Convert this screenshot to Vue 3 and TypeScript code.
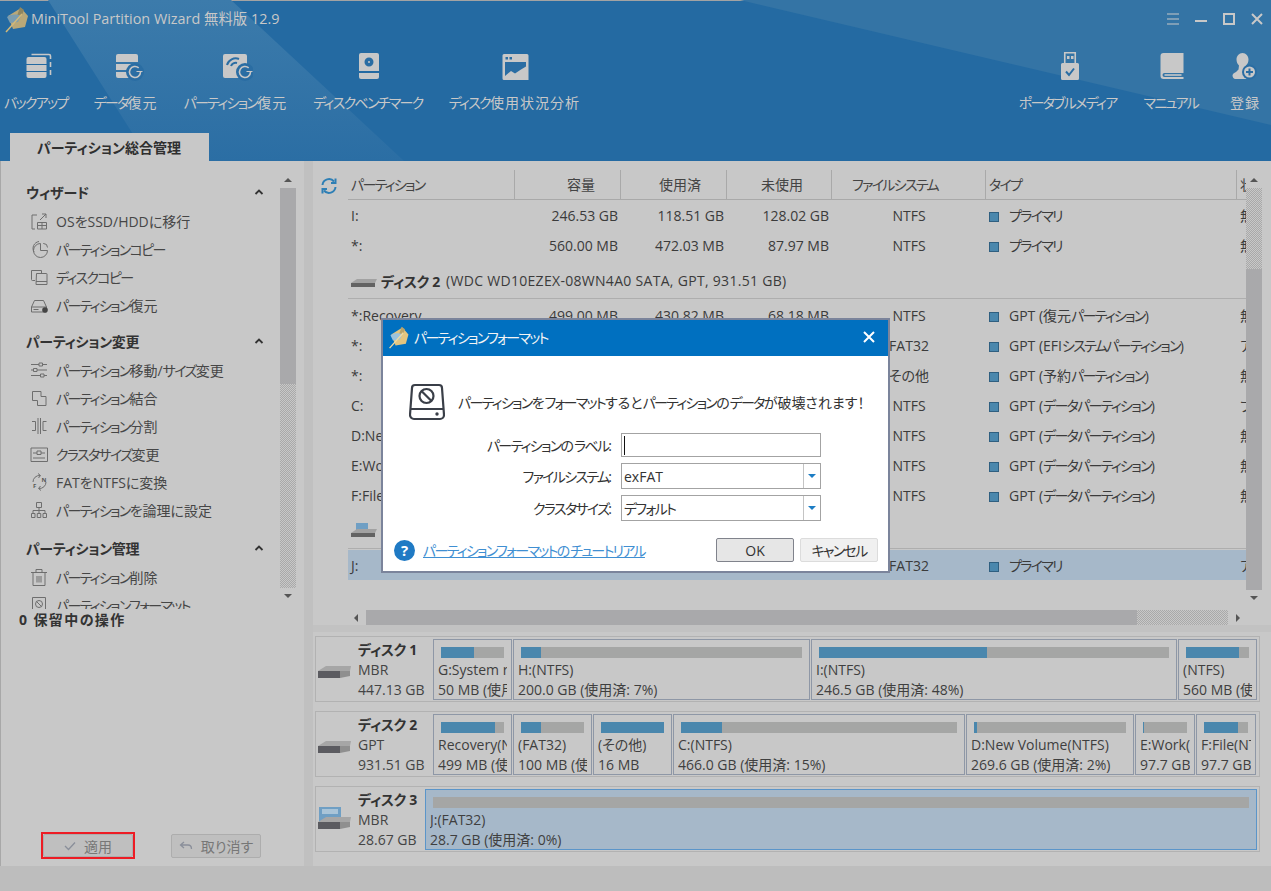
<script setup lang="ts">
import { h } from 'vue'

type Shape = { d: string; k: 'l' | 'b' | 'sl' | 'sb' }
type Tool = { label: string; tx: number; shapes: Shape[] }

const K = (p: { t: string }) =>
  p.t
    .split(/([\u30A0-\u30FF]+)/)
    .filter(Boolean)
    .map((s) => (/^[\u30A0-\u30FF]/.test(s) ? h('span', { class: 'kana' }, s) : s))

const ring = (cx: number, cy: number): Shape[] => [
  { d: `M${cx - 9} ${cy}a9 9 0 1 0 18 0a9 9 0 1 0-18 0z`, k: 'b' },
  { d: `M${cx + 5.5} ${cy}a5.5 5.5 0 1 1-1.8-4.1`, k: 'sl' },
  { d: `M${cx + 1.5} ${cy}h6v-1h-6z`, k: 'l' },
]

const leftTools: Tool[] = [
  { label: 'バックアップ', tx: 8.5, shapes: [
    { d: 'M0 7a2 2 0 0 1 2-2h16a2 2 0 0 1 2 2v5H0z', k: 'l' },
    { d: 'M0 13h20v6H0z', k: 'l' },
    { d: 'M0 20h20v4a2 2 0 0 1-2 2H2a2 2 0 0 1-2-2z', k: 'l' },
    { d: 'M5 2.5h17.5a1.5 1.5 0 0 1 1.5 1.5v3M24 10v5M24 18v5', k: 'sl' },
  ] },
  { label: 'データ復元', tx: 8, shapes: [
    { d: 'M0 4a2 2 0 0 1 2-2h18a2 2 0 0 1 2 2v6H0z', k: 'l' },
    { d: 'M0 12h22v6H0z', k: 'l' },
    { d: 'M0 20h22v6H2a2 2 0 0 1-2-2z', k: 'l' },
    ...ring(19, 20),
  ] },
  { label: 'パーティション復元', tx: 6, shapes: [
    { d: 'M2 2h20a2 2 0 0 1 2 2v22H2a2 2 0 0 1-2-2V4a2 2 0 0 1 2-2z', k: 'l' },
    { d: 'M4 13a9 9 0 0 1 12-6', k: 'sb' },
    { d: 'M8 14a5 5 0 0 1 6-3', k: 'sb' },
    ...ring(22, 20),
  ] },
  { label: 'ディスクベンチマーク', tx: 9, shapes: [
    { d: 'M2 1h16a2 2 0 0 1 2 2v16H0V3a2 2 0 0 1 2-2z', k: 'l' },
    { d: 'M10 5.5a4.5 4.5 0 1 0 0 9a4.5 4.5 0 1 0 0-9zM10 9a1 1 0 1 1 0 2a1 1 0 1 1 0-2z', k: 'b' },
    { d: 'M0 21h20v4a2 2 0 0 1-2 2H2a2 2 0 0 1-2-2z', k: 'l' },
  ] },
  { label: 'ディスク使用状況分析', tx: 6.5, shapes: [
    { d: 'M1.5 2h23a1.5 1.5 0 0 1 1.5 1.5V28H1.5A1.5 1.5 0 0 1 0 26.500V3.500A1.5 1.5 0 0 1 1.500 2z', k: 'l' },
    { d: 'M3 5h2.500v2.500H3zM7 5h2.500v2.500H7zM2.500 10h21v16h-21z', k: 'b' },
    { d: 'M2.500 24l6-5 4 2.500 6-4 5-3V26h-21z', k: 'l' },
  ] },
]

const rightTools: Tool[] = [
  { label: 'ポータブルメディア', tx: 11, shapes: [
    { d: 'M3.750 .75h10.500v11.500H3.750z', k: 'sl' },
    { d: 'M6 4h2.500v3H6zM10 4h2.500v3H10z', k: 'l' },
    { d: 'M1.500 11h15a1.500 1.500 0 0 1 1.500 1.500V26.500a1.500 1.500 0 0 1-1.500 1.500h-15A1.500 1.500 0 0 1 0 26.500v-14A1.500 1.500 0 0 1 1.500 11z', k: 'l' },
    { d: 'M5 19.500l3 3.500 5-6.500', k: 'sb' },
  ] },
  { label: 'マニュアル', tx: 7.5, shapes: [
    { d: 'M3 1h20v20H4a2 2 0 0 0 0 4h19v2H3a3 3 0 0 1-3-3V4a3 3 0 0 1 3-3z', k: 'l' },
    { d: 'M4 23h17', k: 'sl' },
  ] },
  { label: '登録', tx: 5.5, shapes: [
    { d: 'M10 1c3.500 0 6 3 6 6.500 0 2.500-1 4.500-2.500 6l.500 4 3 2-1 7.500H2.500C1 26.500 0 25 0 23.500c0-1.500 1.500-2.500 3.500-3.500L6 17.500l.5-4C5 12 4 10 4 7.500 4 4 6.500 1 10 1z', k: 'l' },
    { d: 'M17 12.500a7.500 7.500 0 1 0 0 15a7.500 7.500 0 1 0 0-15z', k: 'b' },
    { d: 'M17 14.500a5.500 5.500 0 1 0 0 11a5.500 5.500 0 1 0 0-11zM16 16.500h2V19h2.500v2H18v2.500h-2V21h-2.500v-2H16z', k: 'l' },
  ] },
]

type SideItem = { text: string; icon: string[]; letters?: boolean; dot?: boolean }
const sections: { title: string; items: SideItem[] }[] = [
  { title: 'ウィザード', items: [
    { text: 'OSをSSD/HDDに移行', icon: ['M7 3H2v14h3', 'M7.500 10.500h9v6.500h-9z', 'M12 10.500V17', 'M7.500 13.500h9', 'M10 8l6-6', 'M12 2h4v4'] },
    { text: 'パーティションコピー', icon: ['M10.500 3.500a7 7 0 1 0 7 7', 'M10.500 3.500v7h7', 'M13 3.500h.5a4 4 0 0 1 4 4', 'M4 12a7 7 0 0 1 5-10.500'] },
    { text: 'ディスクコピー', icon: ['M5 12.500H2.500a1 1 0 0 1-1-1V2.500h10v2.500', 'M6.500 5.500h10a.5.5 0 0 1 .5.5v10.500H6z', 'M6 13.500h11'] },
    { text: 'パーティション復元', dot: true, icon: ['M1.500 11l3-6.500h9l3 6.500', 'M1.500 11h15v5h-15z', 'M3.500 13.500h5'] },
  ] },
  { title: 'パーティション変更', items: [
    { text: 'パーティション移動/サイズ変更', icon: ['M1 3.500h8M13 3.500h4', 'M9 2h3.500v3H9z', 'M1 9h2M7 9h10', 'M3.500 7.500H7v3H3.500z', 'M1 14.500h9M14 14.500h3', 'M10.500 13H14v3h-3.500z'] },
    { text: 'パーティション結合', icon: ['M2.500 2.500h8.500v5h5v9H7.500v-5h-5z'] },
    { text: 'パーティション分割', icon: ['M8 1v16', 'M10.500 1v16', 'M2 4.500h3.500v9H2', 'M16.500 4.500H13v9h3.500'] },
    { text: 'クラスタサイズ変更', icon: ['M1 3h16.500v13.500H1z', 'M3 8h4M11 8h4', 'M7 6h4v3.500H7z', 'M3 13h12'] },
    { text: 'FATをNTFSに変換', letters: true, icon: ['M3 9a6.500 6.500 0 0 1 7-6.500', 'M8 .5l2.500 2-2 2.500', 'M16 9a6.500 6.500 0 0 1-7 6.500', 'M11 17.500l-2.500-2 2-2.500'] },
    { text: 'パーティションを論理に設定', icon: ['M6.500 1.500h5v5h-5z', 'M9 6.500v5.500', 'M3 12V9.500h12V12', 'M1.500 12.500h3.500v4h-3.500z', 'M7.250 12.500h3.500v4h-3.500z', 'M13 12.500h3.500v4H13z'] },
  ] },
  { title: 'パーティション管理', items: [
    { text: 'パーティション削除', icon: ['M1 4.500h16', 'M6 4.500v-3h6v3', 'M3 4.500v13h12v-13', 'M7 8v6.500M9 8v6.500M11 8v6.500'] },
    { text: 'パーティションフォーマット', icon: ['M2.500 1.500h13v15h-13z', 'M9 4.500a3.500 3.500 0 1 0 0 7a3.500 3.500 0 1 0 0-7z', 'M6.500 5.500l5 5'] },
  ] },
]

type Row =
  | { kind: 'disk'; name: string; info: string; usb: boolean }
  | { kind: 'part'; cells: string[]; selected?: boolean }

const part = (...cells: string[]): Row => ({ kind: 'part', cells })

const rows: Row[] = [
  part('I:', '246.53 GB', '118.51 GB', '128.02 GB', 'NTFS', 'プライマリ', '無し'),
  part('*:', '560.00 MB', '472.03 MB', '87.97 MB', 'NTFS', 'プライマリ', '無し'),
  { kind: 'disk', name: 'ディスク 2', info: '(WDC WD10EZEX-08WN4A0 SATA, GPT, 931.51 GB)', usb: false },
  part('*:Recovery', '499.00 MB', '430.82 MB', '68.18 MB', 'NTFS', 'GPT (復元パーティション)', '無し'),
  part('*:', '100.00 MB', '31.05 MB', '68.95 MB', 'FAT32', 'GPT (EFIシステムパーティション)', 'アクティブ'),
  part('*:', '16.00 MB', '16.00 MB', '0 B', 'その他', 'GPT (予約パーティション)', '無し'),
  part('C:', '466.01 GB', '71.20 GB', '394.81 GB', 'NTFS', 'GPT (データパーティション)', 'ブート'),
  part('D:New Volume', '269.55 GB', '5.90 GB', '263.65 GB', 'NTFS', 'GPT (データパーティション)', '無し'),
  part('E:Work', '97.66 GB', '1.20 GB', '96.46 GB', 'NTFS', 'GPT (データパーティション)', '無し'),
  part('F:File', '97.66 GB', '75.30 GB', '22.36 GB', 'NTFS', 'GPT (データパーティション)', '無し'),
  { kind: 'disk', name: 'ディスク 3', info: '(Generic USB, MBR, 28.67 GB)', usb: true },
  { kind: 'part', selected: true, cells: ['J:', '28.67 GB', '20.34 MB', '28.65 GB', 'FAT32', 'プライマリ', 'アクティブ'] },
]

const columns = ['パーティション', '容量', '使用済', '未使用', 'ファイルシステム', 'タイプ', '状態']

type Part = { name: string; size: string; w: number; pct: number; selected?: boolean }
const disks: { name: string; type: string; size: string; usb?: boolean; parts: Part[] }[] = [
  { name: 'ディスク 1', type: 'MBR', size: '447.13 GB', parts: [
    { name: 'G:System reserved(NTFS)', size: '50 MB (使用済: 52%)', w: 79, pct: 52 },
    { name: 'H:(NTFS)', size: '200.0 GB (使用済: 7%)', w: 297, pct: 7 },
    { name: 'I:(NTFS)', size: '246.5 GB (使用済: 48%)', w: 366, pct: 48 },
    { name: '(NTFS)', size: '560 MB (使用済: 84%)', w: 79, pct: 84 },
  ] },
  { name: 'ディスク 2', type: 'GPT', size: '931.51 GB', parts: [
    { name: 'Recovery(NTFS)', size: '499 MB (使用済: 86%)', w: 79, pct: 86 },
    { name: '(FAT32)', size: '100 MB (使用済: 32%)', w: 79, pct: 32 },
    { name: '(その他)', size: '16 MB', w: 79, pct: 100 },
    { name: 'C:(NTFS)', size: '466.0 GB (使用済: 15%)', w: 292, pct: 15 },
    { name: 'D:New Volume(NTFS)', size: '269.6 GB (使用済: 2%)', w: 168, pct: 2 },
    { name: 'E:Work(NTFS)', size: '97.7 GB (使用済: 1%)', w: 60, pct: 2 },
    { name: 'F:File(NTFS)', size: '97.7 GB (使用済: 77%)', w: 60, pct: 77 },
  ] },
  { name: 'ディスク 3', type: 'MBR', size: '28.67 GB', usb: true, parts: [
    { name: 'J:(FAT32)', size: '28.7 GB (使用済: 0%)', w: 832, pct: 0, selected: true },
  ] },
]
</script>

<template>
  <div class="window">
    <header class="header">
      <svg class="header-art" viewBox="0 0 1271 161" width="1271" height="161" aria-hidden="true">
        <defs>
          <linearGradient id="band" x1="0" y1="0" x2="0" y2="1">
            <stop offset="0" stop-color="#3c7bab" />
            <stop offset="1" stop-color="#2b6ea4" />
          </linearGradient>
        </defs>
        <polygon points="48,0 231,0 404,161 150,161" fill="url(#band)" />
        <polygon points="740,0 1271,0 1271,125" fill="#3474a5" />
      </svg>

      <div class="titlebar">
        <svg class="logo" viewBox="0 0 24 28" width="24" height="28" aria-hidden="true">
          <path d="M3 11l13-8 7 8-3 11-12 2z" fill="#b9a878" />
          <path d="M15 2l4 3-2 5-5 1z" fill="#8f8660" />
          <path d="M2 12c4-3 10-3 14-1l-3 6-8 1z" fill="#7b9db0" />
          <path d="M1 27L17 9" stroke="#d3b978" stroke-width="1.500" fill="none" />
        </svg>
        <span class="app-title">MiniTool Partition Wizard 無料版 12.9</span>
        <div class="winctl">
          <svg viewBox="0 0 14 14" width="14" height="14"><path d="M1 2h12M1 7h12M1 12h12" /></svg>
          <svg viewBox="0 0 14 14" width="14" height="14"><path d="M1 9h12" class="thick" /></svg>
          <svg viewBox="0 0 14 14" width="14" height="14"><path d="M2 2h10v10H2z" class="thick" /></svg>
          <svg viewBox="0 0 14 14" width="14" height="14"><path d="M2 2l10 10M12 2L2 12" class="thick" /></svg>
        </div>
      </div>

      <div class="toolbar">
        <div class="tool-group">
          <div v-for="t in leftTools" :key="t.label" class="tool">
            <svg class="tool-icon" viewBox="0 0 36 30" width="36" height="30" aria-hidden="true">
              <g :transform="`translate(${t.tx} 0)`">
                <path v-for="(s, i) in t.shapes" :key="i" :d="s.d" :class="`k-${s.k}`" />
              </g>
            </svg>
            <span class="tool-label"><K :t="t.label" /></span>
          </div>
        </div>
        <div class="tool-group tool-group-right">
          <div v-for="t in rightTools" :key="t.label" class="tool">
            <svg class="tool-icon" viewBox="0 0 36 30" width="36" height="30" aria-hidden="true">
              <g :transform="`translate(${t.tx} 0)`">
                <path v-for="(s, i) in t.shapes" :key="i" :d="s.d" :class="`k-${s.k}`" />
              </g>
            </svg>
            <span class="tool-label"><K :t="t.label" /></span>
          </div>
        </div>
      </div>

      <div class="tabrow">
        <div class="tab">パーティション総合管理</div>
      </div>
    </header>

    <div class="main">
      <aside class="sidebar">
        <div class="side-scroll">
          <div class="side-list">
            <section v-for="s in sections" :key="s.title" class="section">
              <div class="section-head">
                <span>{{ s.title }}</span>
                <svg viewBox="0 0 10 6" width="10" height="6" aria-hidden="true"><path d="M1.500 5L5 1.500 8.500 5" /></svg>
              </div>
              <div v-for="it in s.items" :key="it.text" class="side-item">
                <svg class="side-icon" viewBox="0 0 18 18" width="18" height="18" aria-hidden="true">
                  <path v-for="(d, i) in it.icon" :key="i" :d="d" />
                  <circle v-if="it.dot" cx="15" cy="14" r="2.800" class="dot" />
                  <text v-if="it.letters" x="11.500" y="9" class="tiny">N</text>
                  <text v-if="it.letters" x="3" y="15" class="tiny">F</text>
                </svg>
                <span><K :t="it.text" /></span>
              </div>
            </section>
          </div>
          <div class="vscroll side-vscroll">
            <div class="arrow-box"><i class="tri up"></i></div>
            <div class="track">
              <div class="thumb side-thumb"></div>
              <div class="dither grow"></div>
            </div>
            <div class="arrow-box"><i class="tri down"></i></div>
          </div>
        </div>
        <div class="pending">0 保留中の操作</div>
        <div class="actions">
          <div class="apply-frame">
            <button class="act-btn apply">
              <svg viewBox="0 0 12 10" width="12" height="10" aria-hidden="true"><path d="M1 5l3.500 3.500L11 1.500" /></svg>
              <span>適用</span>
            </button>
          </div>
          <button class="act-btn undo">
            <svg viewBox="0 0 14 10" width="14" height="10" aria-hidden="true"><path d="M5 1L1.500 4 5 7M1.500 4H9c2 0 3.500 1.500 3.500 4" /></svg>
            <span>取り消す</span>
          </button>
        </div>
      </aside>

      <div class="splitter"></div>

      <div class="content">
        <div class="table-area">
          <div class="table-top">
            <div class="refresh-col">
              <svg viewBox="0 0 18 18" width="18" height="18" aria-hidden="true">
                <path d="M2.500 8a6.500 6.500 0 0 1 11.500-3.500M15.500 10A6.500 6.500 0 0 1 4 13.500" />
                <path d="M15.500 1.500v4.500h-4.500M2.500 16.500V12H7" />
              </svg>
            </div>
            <div class="table">
              <div class="thead">
                <div v-for="(c, i) in columns" :key="c" class="th" :class="`col-${i}`"><K :t="c" /></div>
              </div>
              <template v-for="(r, ri) in rows" :key="ri">
                <div v-if="r.kind === 'disk'" class="disk-row">
                  <span class="mini-disk" :class="{ usb: r.usb }">
                    <svg viewBox="0 0 26 16" width="26" height="16" aria-hidden="true">
                      <rect v-if="r.usb" x="5" y="0" width="12" height="10" fill="#6f9fc4" />
                      <polygon points="0,10 6,6 26,6 24,10" fill="#a2a2a2" />
                      <polygon points="0,10 24,10 24,14 0,14" fill="#636363" />
                    </svg>
                  </span>
                  <b>{{ r.name }}</b>
                  <span class="disk-info">{{ r.info }}</span>
                </div>
                <div v-else class="tr" :class="{ selected: r.selected }">
                  <div v-for="(c, i) in r.cells" :key="i" class="td" :class="`col-${i}`">
                    <i v-if="i === 5" class="type-mark"></i><K :t="c" />
                  </div>
                </div>
              </template>
            </div>
            <div class="vscroll table-vscroll">
              <div class="arrow-box"><i class="tri up"></i></div>
              <div class="track">
                <div class="dither table-dither"></div>
                <div class="thumb grow"></div>
              </div>
              <div class="arrow-box"><i class="tri down"></i></div>
            </div>
          </div>
          <div class="hscroll">
            <i class="tri left"></i>
            <div class="hthumb"></div>
            <div class="dither hdither"></div>
            <i class="tri right"></i>
          </div>
          <div class="strip"></div>
        </div>

        <div class="diskmap">
          <div v-for="d in disks" :key="d.name" class="disk-box">
            <div class="disk-meta" :class="{ narrow: d.usb }">
              <svg class="disk-pic" :class="{ tall: d.usb }" viewBox="0 0 34 28" width="34" height="28" aria-hidden="true">
                <rect v-if="d.usb" x="1" y="1" width="22" height="17" fill="#6f9fc4" />
                <rect v-if="d.usb" x="4" y="3" width="16" height="5" fill="#a9c4d8" />
                <polygon points="0,16 8,11 33,11 32,16" fill="#a6a6a6" />
                <polygon points="0,16 22,16 22,23 0,23" fill="#5b5b60" />
                <polygon points="22,16 32,16 32,21 22,23" fill="#8f8f8f" />
              </svg>
              <div class="disk-text">
                <b>{{ d.name }}</b>
                <span>{{ d.type }}</span>
                <span>{{ d.size }}</span>
              </div>
            </div>
            <div class="parts">
              <div
                v-for="p in d.parts"
                :key="p.name"
                class="part"
                :class="{ selected: p.selected }"
                :style="{ width: p.w + 'px' }"
              >
                <div class="bar"><div class="fill" :style="{ width: p.pct + '%' }"></div></div>
                <div class="part-text"><K :t="p.name" /></div>
                <div class="part-text">{{ p.size }}</div>
              </div>
            </div>
          </div>
        </div>
      </div>
    </div>

    <footer class="status"></footer>

    <div class="dialog">
      <div class="dlg-title">
        <svg viewBox="0 0 24 28" width="22" height="24" aria-hidden="true">
          <path d="M3 11l13-8 7 8-3 11-12 2z" fill="#e3c57f" />
          <path d="M15 2l4 3-2 5-5 1z" fill="#b8a36a" />
          <path d="M2 12c4-3 10-3 14-1l-3 6-8 1z" fill="#9cc3dc" />
          <path d="M1 27L17 9" stroke="#f1dba0" stroke-width="1.500" fill="none" />
        </svg>
        <span><K t="パーティションフォーマット" /></span>
        <svg class="dlg-close" viewBox="0 0 12 12" width="12" height="12" aria-hidden="true"><path d="M1 1l10 10M11 1L1 11" /></svg>
      </div>
      <div class="dlg-warn">
        <svg viewBox="0 0 36 38" width="36" height="38" aria-hidden="true">
          <path d="M6 2h24a3 3 0 0 1 3 3l2 27a4 4 0 0 1-4 4H5a4 4 0 0 1-4-4L3 5a3 3 0 0 1 3-3z" />
          <path d="M1.500 26h33" />
          <circle cx="28" cy="31" r="1.700" class="solid" />
          <circle cx="17.500" cy="13" r="7" />
          <path d="M12.500 8l10 10" />
        </svg>
        <span><K t="パーティションをフォーマットするとパーティションのデータが破壊されます！" /></span>
      </div>
      <div class="dlg-form">
        <label><K t="パーティションのラベル:" /></label>
        <div class="field input"><i class="cursor"></i></div>
        <label><K t="ファイルシステム:" /></label>
        <div class="field select"><span>exFAT</span><em><i class="drop"></i></em></div>
        <label><K t="クラスタサイズ:" /></label>
        <div class="field select"><span><K t="デフォルト" /></span><em><i class="drop"></i></em></div>
      </div>
      <div class="dlg-foot">
        <span class="help">?</span>
        <a class="tutorial"><K t="パーティションフォーマットのチュートリアル" /></a>
        <button class="dlg-btn ok">OK</button>
        <button class="dlg-btn cancel"><K t="キャンセル" /></button>
      </div>
    </div>
  </div>
</template>

<style>
html, body { margin: 0; padding: 0; overflow: hidden; background: #c8c8c8; }
.kana { letter-spacing: -1.7px; }
</style>

<style scoped>
.window {
  position: relative;
  width: 1271px;
  height: 891px;
  display: flex;
  flex-direction: column;
  overflow: hidden;
  background: #c8c8c8;
  color: #3b3b3b;
  font-family: "Open Sans", "Noto Sans CJK JP", sans-serif;
  font-size: 14px;
  font-feature-settings: "palt";
}
.header {
  position: relative;
  height: 161px;
  flex: none;
  background: #246aa2;
  border-top: 1px solid #a3a3a3;
  box-sizing: border-box;
  color: #c8c8c8;
  display: flex;
  flex-direction: column;
}
.header-art { position: absolute; left: 0; top: -1px; }
.titlebar, .toolbar, .tabrow { position: relative; }
.titlebar {
  height: 36px;
  display: flex;
  align-items: center;
  padding-left: 5px;
  flex: none;
}
.logo { flex: none; margin-right: 2px; }
.app-title { font-size: 14.4px; line-height: 36px; }
.winctl {
  margin-left: auto;
  display: flex;
  gap: 14px;
  padding-right: 7px;
}
.winctl path { stroke: #c8c8c8; stroke-width: 1; fill: none; }
.winctl path.thick { stroke-width: 2; }
.toolbar {
  height: 96px;
  flex: none;
  display: flex;
  padding: 15px 8px 0 4px;
  box-sizing: border-box;
}
.tool-group { display: flex; gap: 26px; }
.tool-group-right { margin-left: auto; gap: 27px; }
.tool-group-right .tool:last-child { margin-left: 2px; }
.tool { display: flex; flex-direction: column; align-items: center; }
.tool-icon { display: block; }
.tool-label { margin-top: 11px; line-height: 20px; white-space: nowrap; letter-spacing: 1px; }
.k-l { fill: #c8c8c8; }
.k-b { fill: #2a6da3; fill-rule: evenodd; }
.k-sl { fill: none; stroke: #c8c8c8; stroke-width: 1.6; }
.k-sb { fill: none; stroke: #2a6da3; stroke-width: 2; }
.tabrow { height: 28px; flex: none; padding-left: 10px; }
.tab {
  width: 199px;
  height: 28px;
  background: #c8c8c8;
  color: #2f2f2f;
  font-weight: 700;
  line-height: 29px;
  padding-left: 27px;
  box-sizing: border-box;
}

.main { flex: 1; display: flex; min-height: 0; }
.sidebar {
  width: 304px;
  flex: none;
  display: flex;
  flex-direction: column;
  border-left: 1px solid #a8a8a8;
  box-sizing: border-box;
}
.side-scroll {
  height: 448px;
  flex: none;
  overflow: hidden;
  display: flex;
}
.side-list { width: 279px; flex: none; padding-top: 17px; }
.section + .section { margin-top: 8px; }
.section:last-child { margin-top: 10px; }
.section-head {
  height: 29px;
  display: flex;
  align-items: center;
  justify-content: space-between;
  padding: 0 16px 2px 25px;
  box-sizing: border-box;
  font-weight: 700;
  color: #333;
  letter-spacing: -0.3px;
}
.section-head path { fill: none; stroke: #333; stroke-width: 1.800; }
.side-item {
  height: 28px;
  display: flex;
  align-items: center;
  padding-left: 29px;
  color: #464646;
  white-space: nowrap;
}
.side-icon { flex: none; margin-right: 8px; }
.side-icon path { fill: none; stroke: #6e6e6e; stroke-width: 1; }
.side-icon .dot { fill: #444; }
.side-icon .tiny { font-size: 6px; fill: #555; font-family: "Open Sans", sans-serif; font-weight: 700; }

.vscroll { display: flex; flex-direction: column; width: 16px; flex: none; }
.arrow-box { height: 16px; display: flex; align-items: center; justify-content: center; flex: none; }
.track { display: flex; flex-direction: column; flex: none; }
.grow { flex: 1; }
.thumb { background: #a9a9ab; }
.dither {
  background: repeating-conic-gradient(#a9a9a9 0 25%, #c8c8c8 0 50%) 0 0 / 2px 2px;
}
.side-vscroll { padding-top: 11px; }
.side-vscroll .track { height: 400px; }
.side-thumb { height: 196px; flex: none; }
.tri { display: block; width: 0; height: 0; border-style: solid; border-color: transparent; }
.tri.up { border-width: 0 4px 4px; border-bottom-color: #555; }
.tri.down { border-width: 4px 4px 0; border-top-color: #555; }
.tri.left { border-width: 4px 4px 4px 0; border-right-color: #555; }
.tri.right { border-width: 4px 0 4px 4px; border-left-color: #555; }

.pending {
  height: 22px;
  line-height: 22px;
  padding-left: 18px;
  font-weight: 700;
  color: #333;
  flex: none;
  letter-spacing: 1.4px;
}
.actions {
  margin-top: auto;
  padding: 0 0 7px 40px;
  display: flex;
  align-items: center;
  gap: 36px;
}
.apply-frame {
  width: 94px;
  height: 27px;
  border: 2px solid #ed1c24;
  box-sizing: border-box;
  display: flex;
}
.act-btn {
  font: inherit;
  font-feature-settings: inherit;
  color: #777;
  display: flex;
  align-items: center;
  justify-content: center;
  gap: 8px;
  background: #bfbfbf;
  border: 1px solid #adadad;
  border-radius: 2px;
  padding: 0;
  box-sizing: border-box;
}
.act-btn path { fill: none; stroke: #8a8f9a; stroke-width: 1.300; }
.apply { width: 100%; height: 100%; }
.undo { width: 90px; height: 24px; }

.splitter { width: 9px; flex: none; background: #c0c0c0; }

.content { flex: 1; min-width: 0; display: flex; flex-direction: column; }
.table-area { height: 471px; flex: none; display: flex; flex-direction: column; padding-top: 9px; box-sizing: border-box; }
.table-top { height: 440px; flex: none; display: flex; }
.refresh-col { width: 35px; flex: none; padding: 7px 0 0 7px; box-sizing: border-box; }
.refresh-col path { fill: none; stroke: #2e7fb5; stroke-width: 2; }
.table { width: 898px; flex: none; overflow: hidden; height: 440px; }
.thead, .tr {
  display: grid;
  grid-template-columns: 167px 106px 106px 105px 154px 251px 60px;
}
.thead { height: 29px; border-bottom: 1px solid #a9a9a9; margin-bottom: 1px; }
.th {
  border-right: 1px solid #a9a9a9;
  line-height: 29px;
  white-space: nowrap;
  overflow: hidden;
  color: #444;
  box-sizing: border-box;
}
.th.col-0 { padding-left: 3px; }
.th.col-1, .th.col-2 { text-align: right; padding-right: 25px; }
.th.col-3 { text-align: right; padding-right: 28px; }
.th.col-4 { padding-left: 20px; }
.th.col-5 { padding-left: 3px; }
.th.col-6 { border-right: 0; padding-left: 3px; }
.tr { height: 30px; line-height: 30px; }
.td { white-space: nowrap; overflow: hidden; }
.td.col-0 { padding-left: 3px; }
.td.col-1, .td.col-2, .td.col-3 { text-align: right; padding-right: 3px; }
.td.col-4 { text-align: center; }
.td.col-5 { padding-left: 3px; }
.td.col-6 { padding-left: 3px; }
.tr.selected { background: #a6b8c9; margin-top: -1px; line-height: 31px; }
.type-mark {
  display: inline-block;
  width: 10px;
  height: 10px;
  background: #4a87ad;
  border: 1px solid #2f5f80;
  box-sizing: border-box;
  margin-right: 10px;
  vertical-align: -1px;
}
.disk-row {
  height: 38px;
  display: flex;
  align-items: center;
  padding: 2px 0 0 3px;
  box-sizing: border-box;
  border-bottom: 1px solid #aeaeae;
  margin-bottom: 2px;
  white-space: nowrap;
}
.mini-disk { width: 30px; display: flex; flex: none; }
.disk-row b { color: #333; margin-right: 6px; letter-spacing: -0.3px; }
.disk-info { letter-spacing: 0.3px; }
.table-vscroll { height: 440px; padding-top: 2px; box-sizing: border-box; }
.table-vscroll .track { height: 402px; }
.table-dither { height: 81px; flex: none; }

.hscroll {
  height: 15px;
  flex: none;
  display: flex;
  align-items: center;
  margin-left: 35px;
  padding-left: 6px;
  width: 898px;
  box-sizing: border-box;
}
.hthumb { height: 15px; width: 771px; margin-left: 8px; background: #a9a9ab; flex: none; }
.hdither { height: 15px; width: 91px; flex: none; }
.tri.right { margin-left: 8px; }
.strip { height: 7px; flex: none; background: #c2c2c2; }

.diskmap {
  flex: 1;
  display: flex;
  flex-direction: column;
  gap: 9px;
  padding: 4px 11px 0 2px;
  box-sizing: border-box;
}
.disk-box {
  height: 66px;
  display: flex;
  flex: none;
  border: 1px solid #b2b2b2;
  box-sizing: border-box;
  padding: 2px 0;
}
.disk-meta { width: 117px; flex: none; display: flex; box-sizing: border-box; padding-left: 2px; }
.disk-meta.narrow { width: 109px; }
.disk-pic { margin: 16px 6px 0 0; flex: none; }
.disk-pic.tall { margin-top: 17px; }
.disk-text { display: flex; flex-direction: column; line-height: 20px; white-space: nowrap; color: #444; margin-top: 1px; }
.disk-text b { color: #333; letter-spacing: -0.3px; }
.parts { display: flex; gap: 1px; flex: none; height: 61px; }
.part {
  height: 61px;
  border: 1px solid #8e97a6;
  box-sizing: border-box;
  padding: 7px 7px 0;
  overflow: hidden;
  flex: none;
}
.part.selected { background: #a6b8c9; border-color: #5b95c9; }
.bar { height: 11px; background: #a5a6a5; margin-bottom: 2px; }
.fill { height: 100%; background: #4a87ad; }
.part-text {
  line-height: 20px;
  white-space: nowrap;
  overflow: hidden;
  margin: 0 -3px;
  color: #3f3f3f;
}

.status { height: 25px; flex: none; background: #bdbdbd; }

.dialog {
  position: absolute;
  left: 381px;
  top: 318px;
  width: 509px;
  height: 255px;
  box-sizing: border-box;
  border: 2px solid #7b849b;
  background: #fff;
  color: #333;
  display: flex;
  flex-direction: column;
}
.dlg-title {
  height: 36px;
  flex: none;
  background: #0070c0;
  color: #f4f4f4;
  display: flex;
  align-items: center;
  padding: 0 13px 2px 5px;
  box-sizing: border-box;
  gap: 4px;
}
.dlg-title svg { flex: none; }
.dlg-close { margin-left: auto; }
.dlg-close path { stroke: #fff; stroke-width: 2; fill: none; }
.dlg-warn {
  display: flex;
  align-items: center;
  gap: 13px;
  padding-left: 26px;
  margin-top: 27px;
  height: 38px;
  flex: none;
  white-space: nowrap;
}
.dlg-warn svg { flex: none; }
.dlg-warn path, .dlg-warn circle { fill: none; stroke: #3a3f48; stroke-width: 2.200; }
.dlg-warn circle.solid { fill: #3a3f48; stroke: none; }
.dlg-form {
  display: grid;
  grid-template-columns: 229px 200px;
  column-gap: 9px;
  grid-template-rows: 24px 26px 26px;
  row-gap: 6px;
  margin-top: 12px;
  flex: none;
}
.dlg-form label { text-align: right; align-self: center; white-space: nowrap; }
.field {
  border: 1px solid #a3a3a3;
  box-sizing: border-box;
  display: flex;
  align-items: center;
  padding-left: 2px;
}
.cursor { width: 1px; height: 19px; background: #111; }
.select em { margin-left: auto; height: 100%; width: 16px; border-left: 1px solid #c4c4c4; display: flex; align-items: center; justify-content: center; flex: none; }
.drop { display: block; width: 0; height: 0; border-style: solid; border-color: transparent; border-width: 4px 4px 0; border-top-color: #1c7dc4; }
.dlg-foot {
  display: flex;
  align-items: center;
  padding: 0 10px 0 11px;
  margin-top: 17px;
  height: 24px;
  flex: none;
}
.help {
  width: 21px;
  height: 21px;
  border-radius: 50%;
  background: #1f7ac4;
  color: #fff;
  font-weight: 700;
  font-size: 15px;
  line-height: 21px;
  text-align: center;
  flex: none;
  margin-right: 8px;
}
.tutorial { color: #3f8fd2; text-decoration: underline; white-space: nowrap; }
.dlg-btn {
  font: inherit;
  font-feature-settings: inherit;
  color: #333;
  width: 78px;
  height: 24px;
  padding: 0;
  box-sizing: border-box;
  border-radius: 2px;
  background: #e6e6e6;
}
.ok { margin-left: auto; border: 1px solid #80838c; }
.cancel { margin-left: 6px; border: 1px solid #dcdcdc; background: #f0f0f0; }
</style>
